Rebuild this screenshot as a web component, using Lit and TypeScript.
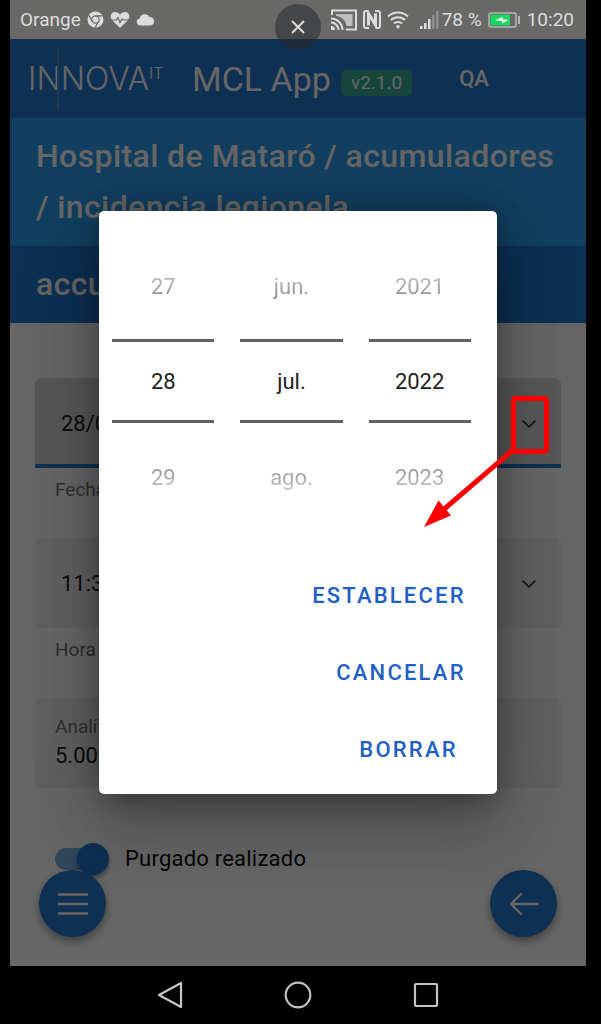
import { LitElement, html, css, svg } from "lit";
import { customElement, property, state } from "lit/decorators.js";
import { classMap } from "lit/directives/class-map.js";

@customElement("status-bar")
class StatusBar extends LitElement {
  static styles = css`
    :host {
      display: flex;
      justify-content: space-between;
      align-items: center;
      box-sizing: border-box;
      height: 39px;
      padding: 0 12px 0 10px;
      background: #696968;
      color: #dcdcdc;
      font-size: 19px;
      line-height: 24px;
    }
    .group {
      display: flex;
      align-items: center;
      gap: 6px;
      white-space: nowrap;
    }
    .percent {
      margin-left: -3px;
    }
    .signal {
      margin-left: 5px;
    }
    svg {
      display: block;
    }
  `;
  render() {
    return html`
      <div class="group">
        <span>Orange</span>
        <svg width="17" height="17" viewBox="0 0 17 17" fill="none">
          <circle cx="8.500" cy="8.500" r="8" fill="#dcdcdc" />
          <circle cx="8.500" cy="8.500" r="3.700" stroke="#696968" stroke-width="1.200" />
          <path d="M8.500 4.800H15.500M5.300 10.300L1.800 4.400M11.700 10.300L8.200 16.300" stroke="#696968" stroke-width="1.200" />
        </svg>
        <svg width="20" height="18" viewBox="0 0 20 18">
          <path d="M10 17L2.200 9.300C-1 5.500 1 1 5 1c2.200 0 4 1 5 2.800C11 2 12.800 1 15 1c4 0 6 4.500 2.800 8.300z" fill="#dcdcdc" />
          <path d="M1 9h5.500l1.500-2.500 2 5 2-3.500 1 1H19" fill="none" stroke="#696968" stroke-width="1.200" />
        </svg>
        <svg width="19" height="13" viewBox="0 0 19 13">
          <path d="M4 12.500a3.600 3.600 0 0 1-.4-7.100A5.500 5.500 0 0 1 13.700 4a4.300 4.300 0 0 1 1 8.500z" fill="#dcdcdc" />
        </svg>
      </div>
      <div class="group">
        <svg width="26" height="22" viewBox="0 0 26 22" fill="none" stroke="#dcdcdc" stroke-width="2">
          <path d="M1 6V1.500h24v19H15" />
          <path d="M5 5h16.500v12H15.500C14.500 11 10.500 7.500 5 7z" fill="#bdbdbd" stroke="none" />
          <path d="M0 9.500a11.500 11.500 0 0 1 11.500 11.500M0 13.500a7.500 7.500 0 0 1 7.500 7.500" />
          <path d="M0 17a4 4 0 0 1 4 4H0z" fill="#dcdcdc" stroke="none" />
        </svg>
        <svg width="18" height="19" viewBox="0 0 18 19" fill="none" stroke="#dcdcdc" stroke-width="2">
          <path d="M5.500 1H3a2 2 0 0 0-2 2v13a2 2 0 0 0 2 2h3M12.500 18H15a2 2 0 0 0 2-2V3a2 2 0 0 0-2-2h-3" />
          <path d="M5.500 15.500V3.500l7 11.500V3.500" stroke-width="3" />
        </svg>
        <svg width="22" height="18" viewBox="0 0 22 18" fill="none" stroke="#dcdcdc" stroke-width="2">
          <path d="M1 5.500a14.500 14.500 0 0 1 20 0M4 9a10 10 0 0 1 14 0M7 12.500a5.800 5.800 0 0 1 8 0" />
          <circle cx="11" cy="15.800" r="1.800" fill="#dcdcdc" stroke="none" />
        </svg>
        <svg class="signal" width="19" height="18" viewBox="0 0 19 18">
          <path d="M0 15h2.500v3H0zM4 12h2.500v6H4zM8 8h2.500v10H8z" fill="#dcdcdc" />
          <path d="M12 4h2.500v14H12zM16 0h2.500v18H16z" fill="#8d8d8d" />
        </svg>
        <span class="percent">78 %</span>
        <svg width="33" height="16" viewBox="0 0 33 16">
          <rect x="1" y="1" width="27" height="14" rx="2" fill="none" stroke="#b5b5b5" stroke-width="1.500" />
          <rect x="2.500" y="2.500" width="19.500" height="11" fill="#1ad760" />
          <path d="M7 8.500l7.500-3.500v2.300l6 .7-6.500 3.500V9z" fill="#fff" />
          <path d="M30 4h2v8h-2z" fill="#b5b5b5" />
        </svg>
        <span>10:20</span>
      </div>
    `;
  }
}

@customElement("wheel-column")
class WheelColumn extends LitElement {
  @property({ type: Array }) values: string[] = [];
  @property() label = "";
  static styles = css`
    :host {
      display: block;
      flex: 1;
      text-align: center;
      font-size: 22px;
      line-height: 26px;
    }
    .item {
      display: flex;
      align-items: center;
      justify-content: center;
      box-sizing: border-box;
      height: 106px;
      padding-top: 2px;
      color: transparent;
      background: linear-gradient(#c4c4c4 38%, #8c8c8c 62%);
      background-clip: text;
      -webkit-background-clip: text;
    }
    .item:last-child {
      height: 108px;
      background-image: linear-gradient(#8c8c8c 38%, #c4c4c4 62%);
    }
    .item.selected {
      height: 84px;
      border: solid #616161;
      border-width: 3px 0;
      color: #212121;
      background: none;
    }
  `;
  render() {
    return html`<div role="listbox" aria-label=${this.label}>
      ${this.values.map(
        (v, i) =>
          html`<div role="option" aria-selected=${i === 1} class=${classMap({ item: true, selected: i === 1 })}>${v}</div>`
      )}
    </div>`;
  }
}

const chevron = svg`<path d="M1.500 1.500l6.500 6.500 6.500-6.500" fill="none" stroke="currentColor" stroke-width="1.500" />`;

@customElement("app-root")
class AppRoot extends LitElement {
  @state() private purged = true;

  static styles = css`
    :host {
      display: block;
      font-family: Roboto, "Liberation Sans", sans-serif;
      background: #000;
    }
    * {
      box-sizing: border-box;
    }
    button,
    input {
      font: inherit;
      color: inherit;
      border: 0;
      background: none;
      padding: 0;
      margin: 0;
    }
    svg {
      display: block;
    }
    .device {
      position: relative;
      display: flex;
      flex-direction: column;
      min-height: 100vh;
      padding: 0 15px 0 10px;
    }
    .close {
      position: absolute;
      z-index: 3;
      top: 4px;
      left: 0;
      right: 5px;
      margin: 0 auto;
      width: 46px;
      height: 46px;
      border-radius: 50%;
      background: rgba(40, 42, 46, 0.55);
      display: grid;
      place-items: center;
    }
    .stage {
      position: relative;
      flex: 1;
      display: flex;
      flex-direction: column;
      overflow: hidden;
      background: #fff;
    }
    .header {
      display: flex;
      align-items: center;
      height: 79px;
      padding: 0 18px;
      background: #2578cf;
      color: #fff;
      white-space: nowrap;
    }
    .logo {
      position: relative;
      display: flex;
      align-items: flex-start;
      width: 148px;
      font: 300 32px/30px Inter, sans-serif;
    }
    .logo sup {
      font-size: 16px;
      line-height: 18px;
      vertical-align: baseline;
    }
    .logo::before {
      content: "";
      position: absolute;
      left: 29px;
      top: -15px;
      width: 2px;
      height: 60px;
      background: #5a92cf;
    }
    .app-name {
      margin: 0 10px 0 16px;
      font-size: 34px;
      font-weight: 400;
    }
    .badge {
      align-self: flex-end;
      margin-bottom: 22px;
      padding: 0 10px;
      border-radius: 5px;
      background: #35ac94;
      font-size: 19px;
      line-height: 26px;
    }
    .env {
      margin-left: 47px;
      font-size: 22px;
      font-weight: 500;
    }
    .crumbs,
    .section {
      margin: 0;
      padding: 13px 26px;
      color: #fff;
      font-size: 32px;
      font-weight: 500;
      line-height: 51px;
      letter-spacing: 0.0125em;
    }
    .crumbs {
      background: #2f9ded;
    }
    .section {
      background: #2578cf;
      height: 77px;
    }
    .form {
      display: flex;
      flex-direction: column;
      padding: 55px 25px 0;
    }
    .field {
      min-height: 160px;
      font-size: 22px;
      color: #222;
    }
    .box {
      display: flex;
      align-items: center;
      height: 90px;
      padding: 2px 24px 0 26px;
      border-radius: 6px 6px 0 0;
      background: #f3f3f3;
    }
    .box.focused {
      background: #dcdcdc;
      box-shadow: inset 0 -4px #2578cf;
    }
    .box.stacked {
      flex-direction: column;
      align-items: flex-start;
      justify-content: center;
      padding: 0 20px 2px;
    }
    .box input {
      flex: 1;
      min-width: 0;
      line-height: 30px;
      outline: 0;
    }
    .box.stacked input {
      flex: none;
      width: 100%;
    }
    .helper {
      display: block;
      padding: 9px 20px;
      font-size: 19px;
      line-height: 26px;
      color: #777;
    }
    .box.stacked label {
      font-size: 19px;
      line-height: 28px;
      color: #777;
    }
    .switch {
      display: flex;
      align-items: center;
      gap: 16px;
      margin: -16px 0 0 20px;
      font-size: 22px;
      line-height: 34px;
      letter-spacing: 0.01em;
      color: #111;
    }
    .switch input {
      appearance: none;
      position: relative;
      width: 54px;
      height: 22px;
      border-radius: 11px;
      background: linear-gradient(90deg, #7ab4e8 0 44px, transparent 44px);
    }
    .switch input::after {
      content: "";
      position: absolute;
      top: -5px;
      left: 0;
      width: 32px;
      height: 32px;
      border-radius: 50%;
      background: #2578cf;
      box-shadow: 0 3px 5px rgba(0, 0, 0, 0.4);
    }
    .switch input:checked::after {
      left: 22px;
    }
    .fabs {
      position: absolute;
      left: 29px;
      right: 29px;
      bottom: 29px;
      display: flex;
      justify-content: space-between;
    }
    .fab {
      display: grid;
      place-items: center;
      width: 67px;
      height: 67px;
      border-radius: 50%;
      background: #2578cf;
      color: #fff;
      box-shadow: 0 4px 8px rgba(0, 0, 0, 0.4);
    }
    .backdrop {
      position: absolute;
      inset: 0;
      z-index: 1;
      display: grid;
      place-items: center;
      background: rgba(0, 0, 0, 0.6);
    }
    .dialog {
      width: 69%;
      padding: 22px 0 15px;
      border-radius: 5px;
      background: #fff;
      box-shadow: 0 18px 24px -11px rgba(0, 0, 0, 0.2), 0 38px 61px 5px rgba(0, 0, 0, 0.14),
        0 14px 74px 13px rgba(0, 0, 0, 0.12), 0 0 28px rgba(0, 0, 0, 0.2);
    }
    .wheels {
      display: flex;
      gap: 26px;
      padding: 0 26px 0 13px;
    }
    .actions {
      display: flex;
      flex-direction: column;
      align-items: flex-end;
      gap: 19px;
      padding: 36px 19px 0;
    }
    .actions button {
      height: 58px;
      padding: 0 12px;
      font-size: 22px;
      font-weight: 500;
      line-height: 26px;
      letter-spacing: 0.1em;
      color: #1f5fc8;
    }
    .actions .neutral {
      margin-right: 8px;
    }
    .callout {
      position: absolute;
      z-index: 2;
      top: 357px;
      right: 36px;
      pointer-events: none;
    }
    .nav {
      display: flex;
      justify-content: center;
      align-items: center;
      gap: 100px;
      height: 58px;
      color: #c4c4c4;
    }
  `;

  render() {
    return html`
      <div class="device">
        <status-bar></status-bar>
        <button class="close" aria-label="Cerrar">
          <svg width="16" height="16" viewBox="0 0 16 16"><path d="M2 2l12 12M14 2L2 14" stroke="#ddd" stroke-width="2" /></svg>
        </button>
        <div class="stage">
          <header class="header">
            <div class="logo"><span>INNOVA</span><sup>IT</sup></div>
            <span class="app-name">MCL App</span>
            <span class="badge">v2.1.0</span>
            <span class="env">QA</span>
          </header>
          <h1 class="crumbs">Hospital de Mataró / acumuladores / incidencia legionela</h1>
          <h2 class="section">accum.</h2>
          <main class="form">
            <div class="field">
              <div class="box focused">
                <input id="date" .value=${"28/07/2022"} />
                <button aria-label="Elegir fecha"><svg width="16" height="10" viewBox="0 0 16 10">${chevron}</svg></button>
              </div>
              <label class="helper" for="date">Fecha</label>
            </div>
            <div class="field">
              <div class="box">
                <input id="time" .value=${"11:30"} />
                <button aria-label="Elegir hora"><svg width="16" height="10" viewBox="0 0 16 10">${chevron}</svg></button>
              </div>
              <label class="helper" for="time">Hora</label>
            </div>
            <div class="field">
              <div class="box stacked">
                <label for="analysis">Analítica</label>
                <input id="analysis" .value=${"5.000"} />
              </div>
            </div>
            <label class="switch">
              <input
                type="checkbox"
                .checked=${this.purged}
                @change=${(e: Event) => (this.purged = (e.target as HTMLInputElement).checked)}
              />
              <span>Purgado realizado</span>
            </label>
          </main>
          <div class="fabs">
            <button class="fab" aria-label="Menú">
              <svg width="30" height="24" viewBox="0 0 30 24"><path d="M0 2.500h30M0 12h30M0 21.500h30" stroke="currentColor" stroke-width="2.400" /></svg>
            </button>
            <button class="fab" aria-label="Volver">
              <svg width="30" height="24" viewBox="0 0 30 24" fill="none" stroke="currentColor" stroke-width="2.400" stroke-linecap="round" stroke-linejoin="round">
                <path d="M12 2L2 12l10 10M2 12h26.500" />
              </svg>
            </button>
          </div>
          <div class="backdrop">
            <div class="dialog" role="dialog" aria-label="Fecha">
              <div class="wheels">
                <wheel-column label="Día" .values=${["27", "28", "29"]}></wheel-column>
                <wheel-column label="Mes" .values=${["jun.", "jul.", "ago."]}></wheel-column>
                <wheel-column label="Año" .values=${["2021", "2022", "2023"]}></wheel-column>
              </div>
              <div class="actions">
                <button>ESTABLECER</button>
                <button>CANCELAR</button>
                <button class="neutral">BORRAR</button>
              </div>
            </div>
          </div>
          <svg class="callout" width="126" height="132" viewBox="0 0 126 132">
            <rect x="89.500" y="2.500" width="33" height="53" rx="2" fill="none" stroke="#f00" stroke-width="5" />
            <path d="M89 54L18 115" stroke="#f00" stroke-width="5" />
            <path d="M0 131L14.500 104.500L27 119.500z" fill="#f00" />
          </svg>
        </div>
        <nav class="nav">
          <button aria-label="Atrás">
            <svg width="28" height="28" viewBox="0 0 28 28" fill="none" stroke="currentColor" stroke-width="2.200" stroke-linejoin="round"><path d="M25 2v24L3 14z" /></svg>
          </button>
          <button aria-label="Inicio">
            <svg width="28" height="28" viewBox="0 0 28 28" fill="none" stroke="currentColor" stroke-width="2.200"><circle cx="14" cy="14" r="12.300" /></svg>
          </button>
          <button aria-label="Recientes">
            <svg width="28" height="28" viewBox="0 0 28 28" fill="none" stroke="currentColor" stroke-width="2.200" stroke-linejoin="round"><rect x="3" y="3" width="22" height="22" rx="1" /></svg>
          </button>
        </nav>
      </div>
    `;
  }
}
